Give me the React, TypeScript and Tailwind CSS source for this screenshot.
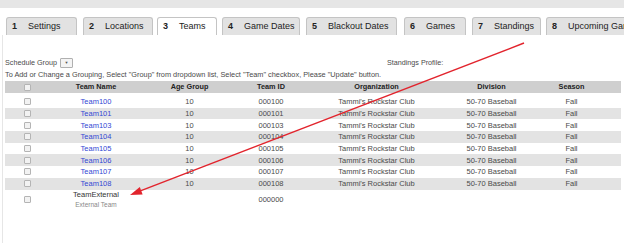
import React from "react";

const tabs = [
  { n: "1", label: "Settings", cls: "ml-[6px] w-[71px]", active: false },
  { n: "2", label: "Locations", cls: "ml-[6px] w-[70px]", active: false },
  { n: "3", label: "Teams", cls: "ml-[4px] w-[60px]", active: true },
  { n: "4", label: "Game Dates", cls: "ml-[5px] w-[78px]", active: false },
  { n: "5", label: "Blackout Dates", cls: "ml-[6px] w-[91px]", active: false },
  { n: "6", label: "Games", cls: "ml-[7px] w-[62px]", active: false },
  { n: "7", label: "Standings", cls: "ml-[6px] w-[69px]", active: false },
  { n: "8", label: "Upcoming Games", cls: "ml-[5px] w-[95px]", active: false },
];

const rows = ["100", "101", "103", "104", "105", "106", "107", "108"];

const cols = "grid grid-cols-[44px_94px_93px_70px_141px_89px_71px_1fr] items-center";

function Box() {
  return <div className="w-[7px] h-[7px] border border-[#b4b4b4] bg-[#f2f2f2] rounded-[1px]" />;
}

export default function App() {
  return (
    <div className="relative w-[624px] h-[243px] overflow-hidden bg-white font-['Liberation_Sans',Arial,sans-serif]">
      <div className="h-[8px] bg-[#e6e6e6]" />
      <div className="flex mt-[9px] h-[18px] whitespace-nowrap">
        {tabs.map((t) => (
          <div
            key={t.n}
            className={`${t.cls} shrink-0 flex items-center h-[18px] border border-b-0 rounded-t-[3px] text-[9px] text-[#222] ${
              t.active ? "bg-white border-[#c4c4c4]" : "bg-[#e2e2e2] border-[#c4c4c4]"
            }`}
          >
            <span className="pl-[5px] w-[21px] font-bold">{t.n}</span>
            <span>{t.label}</span>
          </div>
        ))}
      </div>
      <div className="ml-[2px] h-[208px] border-l border-[#e6e6e6] pl-[2px] pt-[22px] text-[#4a4a4a]">
        <div className="flex items-center h-[12px] text-[7.2px] whitespace-nowrap">
          <span>Schedule Group</span>
          <div className="ml-[3px] w-[13px] h-[10px] border border-[#b0b0b0] bg-[#f4f4f4] rounded-[1px] flex items-center justify-center text-[4px] text-[#555]">
            ▼
          </div>
          <span className="ml-[314px]">Standings Profile:</span>
        </div>
        <div className="h-[11px] flex items-center text-[7.35px] whitespace-nowrap">
          To Add or Change a Grouping, Select "Group" from dropdown list, Select "Team" checkbox, Please "Update" button.
        </div>
        <div className="mt-[1px] w-[616px]">
          <div className={`${cols} h-[12px] bg-[#cfcfcf] text-[7.3px] font-bold text-[#222] text-center`}>
            <div className="flex justify-center">
              <Box />
            </div>
            <div>Team Name</div>
            <div>Age Group</div>
            <div>Team ID</div>
            <div>Organization</div>
            <div>Division</div>
            <div>Season</div>
            <div />
          </div>
          <div className="h-[3px]" />
          {rows.map((r, i) => (
            <div
              key={r}
              className={`${cols} h-[11.7px] text-[7.5px] text-center text-[#4a4a4a] ${
                i % 2 === 1 ? "bg-[#e3e3e3]" : "bg-white"
              }`}
            >
              <div className="flex justify-center">
                <Box />
              </div>
              <div className="text-[#3347d4]">Team{r}</div>
              <div>10</div>
              <div>000{r}</div>
              <div>Tammi's Rockstar Club</div>
              <div>50-70 Baseball</div>
              <div>Fall</div>
              <div />
            </div>
          ))}
          <div className={`${cols} h-[20px] text-center text-[#4a4a4a]`}>
            <div className="flex justify-center">
              <Box />
            </div>
            <div className="flex flex-col items-center leading-[9.5px]">
              <span className="text-[7.5px] text-[#333]">TeamExternal</span>
              <span className="text-[6.5px] text-[#888]">External Team</span>
            </div>
            <div />
            <div className="text-[7.5px]">000000</div>
            <div />
            <div />
            <div />
            <div />
          </div>
        </div>
      </div>
      <svg className="absolute left-0 top-0 pointer-events-none" width="624" height="243">
        <line x1="524" y1="43" x2="141" y2="190.7" stroke="#e2242d" strokeWidth="1.4" />
        <polygon points="130,195 142.6,194.4 139.8,186.9" fill="#e2242d" />
      </svg>
    </div>
  );
}
